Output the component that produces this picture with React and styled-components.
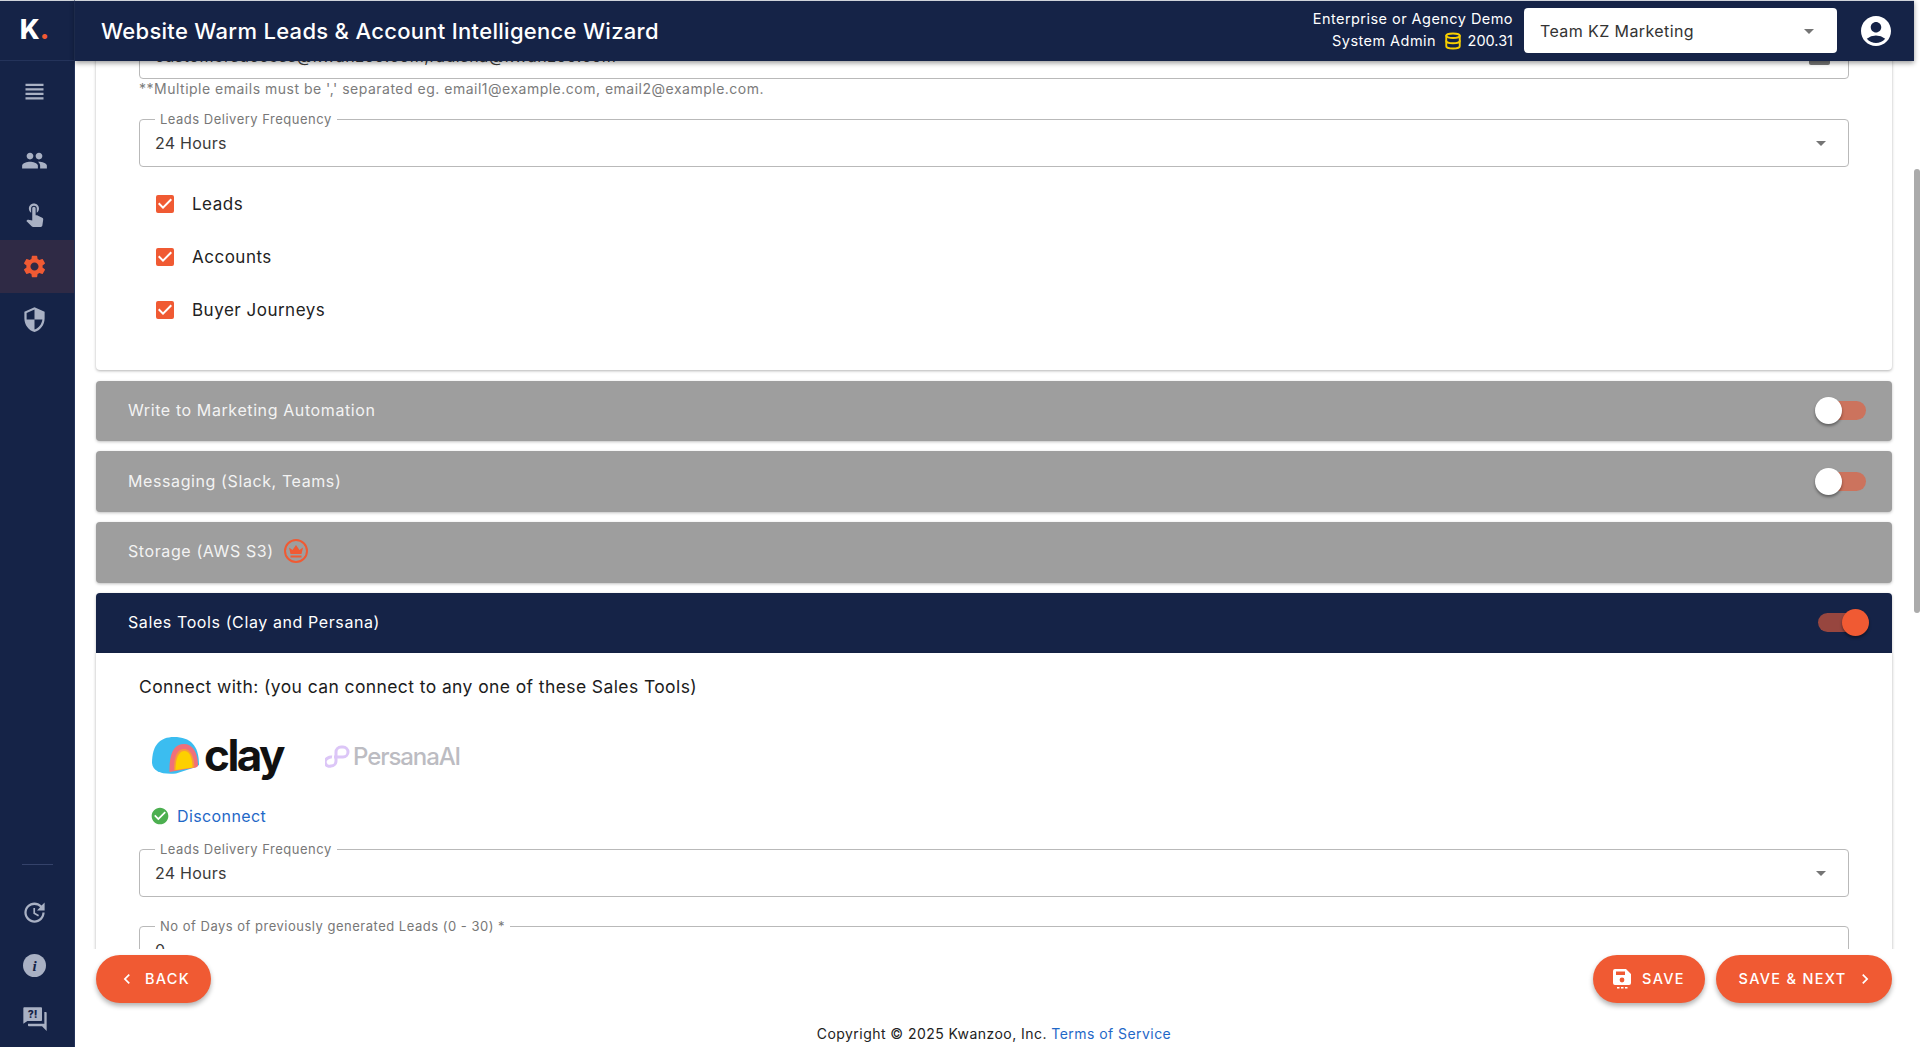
import React from "react";
import styled, { createGlobalStyle } from "styled-components";
import {
  MdViewHeadline,
  MdPeople,
  MdTouchApp,
  MdSettings,
  MdSecurity,
  MdUpdate,
  MdAccountCircle,
  MdArrowDropDown,
  MdCheckBox,
  MdCheckCircle,
  MdChevronLeft,
  MdChevronRight,
} from "react-icons/md";
import { Database } from "lucide-react";

const NAVY = "#152347";
const ORANGE = "#f05a33";

const GlobalStyle = createGlobalStyle`
  html, body { margin: 0; padding: 0; height: 100%; overflow: hidden; background: #fff; }
  body { font-family: Inter, "Open Sans", Arial, sans-serif; color: #222; }
  * { box-sizing: border-box; }
`;

const Shell = styled.div`
  display: flex;
  height: 100vh;
  overflow: hidden;
`;

const Sidebar = styled.aside`
  width: 75px;
  flex: none;
  display: flex;
  flex-direction: column;
  background: ${NAVY};
  border-top: 1px solid #cfd3da;
  border-right: 1px solid #24335a;
  padding-bottom: 2px;
`;

const Logo = styled.div`
  height: 60px;
  flex: none;
  display: flex;
  align-items: center;
  justify-content: center;
  padding: 0 5px 3px 0;
  font-size: 27px;
  font-weight: 800;
  color: #fff;
  border-bottom: 1px solid #24335a;
  span { color: ${ORANGE}; }
`;

const NavList = styled.nav`
  display: flex;
  flex-direction: column;
  margin-top: ${(p) => p.$top || 0}px;
`;

const NavItem = styled.div`
  height: 53px;
  display: flex;
  align-items: center;
  justify-content: center;
  padding-right: 5px;
  color: ${(p) => (p.$active ? ORANGE : "#a9b1c4")};
  background: ${(p) => (p.$active ? "#2f2a45" : "transparent")};
  font-size: 27px;
`;

const SideBottom = styled.div`
  margin-top: auto;
  display: flex;
  flex-direction: column;
`;

const SideRule = styled.div`
  width: 31px;
  height: 1px;
  background: #34426a;
  margin: 0 0 21px 22px;
`;

const Main = styled.div`
  flex: 1;
  min-width: 0;
  display: flex;
  flex-direction: column;
`;

const Header = styled.header`
  height: 61px;
  flex: none;
  display: flex;
  align-items: center;
  background: ${NAVY};
  border-top: 1px solid #cfd3da;
  padding: 0 20px 1px 26px;
  color: #fff;
  box-shadow: 0 2px 5px rgba(0, 0, 0, 0.4);
  position: relative;
  z-index: 2;
`;

const Title = styled.h1`
  flex: 1;
  margin: 0;
  font-size: 22px;
  font-weight: 500;
  letter-spacing: 0.3px;
`;

const UserInfo = styled.div`
  text-align: right;
  font-size: 14.5px;
  line-height: 22px;
  letter-spacing: 0.45px;
  margin: 0 11px 1px 0;
  svg { vertical-align: -4px; margin: 0 6px 0 3px; color: #f7cf00; }
`;

const Credits = styled.span`
  letter-spacing: 0;
`;

const TeamSelect = styled.div`
  width: 313px;
  height: 45px;
  display: flex;
  align-items: center;
  justify-content: space-between;
  padding: 0 16px;
  background: #fff;
  color: #333;
  border-radius: 4px;
  font-size: 16px;
  letter-spacing: 0.4px;
  margin-right: 21px;
  svg { color: #757575; }
`;

const Scroller = styled.div`
  flex: 1;
  min-height: 0;
  overflow: hidden;
  padding: 0 22px 0 21px;
  display: flex;
  flex-direction: column;
`;

const Card = styled.section`
  flex: none;
  margin-top: -30px;
  height: 339px;
  padding: 0 43px;
  background: #fff;
  border-radius: 0 0 4px 4px;
  box-shadow: 0 1px 3px rgba(0, 0, 0, 0.3);
`;

const Field = styled.div`
  position: relative;
  height: 48px;
  display: flex;
  align-items: center;
  justify-content: space-between;
  padding: 0 17px 0 15px;
  border: 1px solid #b9b9b9;
  border-radius: 4px;
  font-size: 16px;
  letter-spacing: 0.25px;
  color: #3a3a3a;
  svg { margin-right: -2px; color: #757575; }
`;

const EmailField = styled(Field)`
  padding-top: 2px;
  letter-spacing: 0.55px;
`;

const FieldLabel = styled.span`
  position: absolute;
  top: -9px;
  left: 15px;
  padding: 0 5px;
  background: #fff;
  font-size: 13px;
  line-height: 16px;
  letter-spacing: 0.5px;
  color: #777;
`;

const ListButton = styled.span`
  width: 21px;
  height: 20px;
  margin: -2px 1px 0 0;
  border-radius: 2px;
  background: #777;
`;

const Helper = styled.p`
  margin: 1px 0 21px;
  height: 18px;
  font-size: 14px;
  line-height: 18px;
  letter-spacing: 0.5px;
  color: #7b7b7b;
`;

const Checks = styled.div`
  display: flex;
  flex-direction: column;
  margin-top: 10px;
`;

const CheckRow = styled.label`
  height: 53px;
  display: flex;
  align-items: center;
  padding-left: 14px;
  font-size: 17px;
  letter-spacing: 0.5px;
  color: #222;
  svg { color: ${ORANGE}; margin-right: 15px; }
`;

const Rows = styled.div`
  display: flex;
  flex-direction: column;
  gap: 10px;
  margin-top: 10.67px;
  flex: none;
`;

const Row = styled.div`
  height: 60.67px;
  flex: none;
  display: flex;
  align-items: center;
  justify-content: space-between;
  padding: 0 26px 2px 32px;
  color: ${(p) => (p.$open ? "#fff" : "#f3f3f3")};
  background: ${(p) => (p.$open ? NAVY : "#9e9e9e")};
  border-radius: ${(p) => (p.$open ? "4px 4px 0 0" : "4px")};
  font-size: 16px;
  letter-spacing: 0.6px;
  box-shadow: 0 1px 3px rgba(0, 0, 0, 0.25);
`;

const RowTitle = styled.span`
  display: flex;
  align-items: center;
  gap: 10px;
`;

const CrownBadge = styled.span`
  width: 24px;
  height: 24px;
  display: flex;
  align-items: center;
  justify-content: center;
  border: 2px solid ${ORANGE};
  border-radius: 50%;
  color: ${ORANGE};
`;

const Track = styled.span`
  position: relative;
  width: 48px;
  height: 19px;
  margin-top: 2px;
  border-radius: 10px;
  background: ${(p) => (p.$on ? "#97463f" : "#cc735d")};
`;

const Knob = styled.span`
  position: absolute;
  top: -4px;
  left: ${(p) => (p.$on ? "24px" : "-3px")};
  width: 27px;
  height: 27px;
  border-radius: 50%;
  background: ${(p) => (p.$on ? ORANGE : "#fff")};
  box-shadow: 0 2px 3px rgba(0, 0, 0, 0.4);
`;

const Panel = styled.div`
  padding: 22px 43px 0;
  background: #fff;
  box-shadow: 0 1px 3px rgba(0, 0, 0, 0.3);
  flex: none;
`;

const Connect = styled.p`
  margin: 0;
  font-size: 17.5px;
  line-height: 24px;
  letter-spacing: 0.4px;
  color: #1c1c1c;
`;

const Logos = styled.div`
  display: flex;
  align-items: center;
  height: 44px;
  margin: 34px 0 0 13px;
`;

const ClayWord = styled.span`
  margin-left: 5px;
  font-size: 44px;
  font-weight: 700;
  letter-spacing: -2.5px;
  line-height: 44px;
  color: #111;
`;

const PersanaWord = styled.span`
  margin: 2px 0 0 3px;
  font-size: 24px;
  font-weight: 500;
  letter-spacing: -1.1px;
  color: #bcbcc2;
`;

const PersanaMark = styled.svg`
  margin: 4px 0 0 42px;
`;

const StatusRow = styled.div`
  display: flex;
  align-items: center;
  gap: 7px;
  margin: 27px 0 0 11px;
  height: 24px;
  font-size: 16px;
  letter-spacing: 0.4px;
  color: #1f68c7;
  svg { color: #4caf50; }
`;

const StackField = styled(Field)`
  margin-top: ${(p) => p.$top}px;
`;

const Footer = styled.footer`
  height: 98px;
  flex: none;
  display: flex;
  flex-direction: column;
  padding: 6px 22px 0 21px;
  background: #fff;
  position: relative;
`;

const Actions = styled.div`
  display: flex;
  justify-content: space-between;
`;

const ActionGroup = styled.div`
  display: flex;
  gap: 11px;
`;

const ActionButton = styled.button`
  height: 48px;
  width: ${(p) => p.$w}px;
  display: flex;
  align-items: center;
  justify-content: center;
  gap: ${(p) => p.$gap || 12}px;
  padding: 0 0 1px ${(p) => p.$shift || 0}px;
  border: 0;
  border-radius: 24px;
  background: ${ORANGE};
  color: #fff;
  font-family: inherit;
  font-size: 14.5px;
  font-weight: 500;
  letter-spacing: 1.3px;
  box-shadow: 0 3px 5px rgba(0, 0, 0, 0.3);
`;

const Copyright = styled.div`
  margin-top: 22px;
  text-align: center;
  font-size: 14px;
  line-height: 18px;
  letter-spacing: 0.45px;
  color: #222;
  a { color: #1f68c7; text-decoration: none; }
`;

const Rail = styled.div`
  width: 6px;
  flex: none;
  padding-top: 169px;
  background: #fff;
`;

const Thumb = styled.div`
  height: 444px;
  border-radius: 3px;
  background: #ababab;
`;

function Toggle({ on }) {
  return (
    <Track $on={on}>
      <Knob $on={on} />
    </Track>
  );
}

function ForumIcon() {
  return (
    <svg width="28" height="28" viewBox="0 0 24 24" fill="currentColor">
      <path d="M22 6h-2v10H6v1.500c0 .4.3.7.7.7H18l4 4V6.700c0-.4-.3-.7-.7-.7zM18 13V2.700c0-.4-.3-.7-.7-.7H2.700c-.4 0-.7.3-.7.7V16l3.500-2.300h11.800c.4 0 .7-.3.7-.7z" />
      <text x="10" y="11" textAnchor="middle" fontSize="9" fontWeight="800" fontFamily="Inter, sans-serif" fill={NAVY}>?!</text>
    </svg>
  );
}

function InfoIcon() {
  return (
    <svg width="23" height="23" viewBox="0 0 23 23">
      <circle cx="11.500" cy="11.500" r="11.500" fill="currentColor" />
      <text x="11.500" y="17" textAnchor="middle" fontSize="15" fontStyle="italic" fontWeight="700" fontFamily="'Liberation Serif', serif" fill={NAVY}>i</text>
    </svg>
  );
}

function CrownIcon() {
  return (
    <svg width="14" height="13" viewBox="0 0 14 13" fill={ORANGE}>
      <path d="M0 2.500l3.500 2.500L7 0l3.500 5L14 2.500 12.500 9h-11z" />
      <rect x="1.500" y="10.500" width="11" height="2" />
    </svg>
  );
}

function SaveIcon() {
  return (
    <svg width="18" height="20" viewBox="0 0 18 20" fill="#fff">
      <path d="M2 0h11l5 5v9a2 2 0 0 1-2 2H2a2 2 0 0 1-2-2V2a2 2 0 0 1 2-2zm1 2.500v3.500h9V2.500H3z" fillRule="evenodd" />
      <circle cx="9" cy="11" r="2.400" fill={ORANGE} />
      <rect x="4" y="18" width="2.500" height="1.500" />
      <rect x="8" y="18" width="2.500" height="1.500" />
      <rect x="12" y="18" width="2.500" height="1.500" />
    </svg>
  );
}

function ClayArch() {
  return (
    <svg width="47" height="37" viewBox="0 0 47 37">
      <path d="M0 26C0 8 8 0 22 0c17 0 25 9 25 28l-3 2-20 6.500C10 37.500 1 35 0 26z" fill="#3bbdf0" />
      <path d="M17.500 35C17 16 22 7 32 7c9 0 14 9 14 22l-2 1.500z" fill="#f0707a" />
      <path d="M22 33.500C22 20 25 12 32 12c7 0 10 8 10.500 18.500z" fill="#f79a3c" />
      <path d="M23.500 33C23.500 21 27 14 32.500 14c5 0 8 7 8 16.500z" fill="#fdd000" />
    </svg>
  );
}

function PersanaIcon() {
  return (
    <PersanaMark width="25" height="24" viewBox="0 0 25 24" fill="none" stroke="#dcc6f7" strokeWidth="3">
      <path d="M9 12h9a5 5 0 0 0 0-10h-2a5 5 0 0 0-5 5v9a5 5 0 0 1-5 5 4 4 0 0 1-3-8 5 5 0 0 1 4-1" />
    </PersanaMark>
  );
}

export default function App() {
  return (
    <>
      <GlobalStyle />
      <Shell>
        <Sidebar>
          <Logo>K<span>.</span></Logo>
          <NavList $top={4}>
            <NavItem><MdViewHeadline /></NavItem>
          </NavList>
          <NavList $top={16}>
            <NavItem><MdPeople /></NavItem>
            <NavItem><MdTouchApp /></NavItem>
            <NavItem $active><MdSettings /></NavItem>
            <NavItem><MdSecurity /></NavItem>
          </NavList>
          <SideBottom>
            <SideRule />
            <NavItem><MdUpdate /></NavItem>
            <NavItem><InfoIcon /></NavItem>
            <NavItem><ForumIcon /></NavItem>
          </SideBottom>
        </Sidebar>

        <Main>
          <Header>
            <Title>Website Warm Leads &amp; Account Intelligence Wizard</Title>
            <UserInfo>
              <div>Enterprise or Agency Demo</div>
              <div>System Admin <Database size={18} strokeWidth={2.5} /><Credits>200.31</Credits></div>
            </UserInfo>
            <TeamSelect>
              Team KZ Marketing
              <MdArrowDropDown size={24} />
            </TeamSelect>
            <MdAccountCircle size={36} />
          </Header>

          <Scroller>
            <Card>
              <EmailField>
                customersuccess@kwanzoo.com,radisha@kwanzoo.com
                <ListButton />
              </EmailField>
              <Helper>**Multiple emails must be ',' separated eg. email1@example.com, email2@example.com.</Helper>
              <Field>
                <FieldLabel>Leads Delivery Frequency</FieldLabel>
                24 Hours
                <MdArrowDropDown size={24} />
              </Field>
              <Checks>
                <CheckRow><MdCheckBox size={24} />Leads</CheckRow>
                <CheckRow><MdCheckBox size={24} />Accounts</CheckRow>
                <CheckRow><MdCheckBox size={24} />Buyer Journeys</CheckRow>
              </Checks>
            </Card>

            <Rows>
              <Row>
                Write to Marketing Automation
                <Toggle />
              </Row>
              <Row>
                Messaging (Slack, Teams)
                <Toggle />
              </Row>
              <Row>
                <RowTitle>
                  Storage (AWS S3)
                  <CrownBadge><CrownIcon /></CrownBadge>
                </RowTitle>
              </Row>
              <Row $open>
                Sales Tools (Clay and Persana)
                <Toggle on />
              </Row>
            </Rows>

            <Panel>
              <Connect>Connect with: (you can connect to any one of these Sales Tools)</Connect>
              <Logos>
                <ClayArch />
                <ClayWord>clay</ClayWord>
                <PersanaIcon />
                <PersanaWord>PersanaAI</PersanaWord>
              </Logos>
              <StatusRow>
                <MdCheckCircle size={20} />
                Disconnect
              </StatusRow>
              <StackField $top={21}>
                <FieldLabel>Leads Delivery Frequency</FieldLabel>
                24 Hours
                <MdArrowDropDown size={24} />
              </StackField>
              <StackField $top={29}>
                <FieldLabel>No of Days of previously generated Leads (0 - 30) *</FieldLabel>
                0
              </StackField>
            </Panel>
          </Scroller>

          <Footer>
            <Actions>
              <ActionButton $w={115} $gap={8}><MdChevronLeft size={20} />BACK</ActionButton>
              <ActionGroup>
                <ActionButton $w={112} $gap={11}><SaveIcon />SAVE</ActionButton>
                <ActionButton $w={176} $gap={9} $shift={6}>SAVE &amp; NEXT<MdChevronRight size={20} /></ActionButton>
              </ActionGroup>
            </Actions>
            <Copyright>Copyright © 2025 Kwanzoo, Inc. <a href="#terms">Terms of Service</a></Copyright>
          </Footer>
        </Main>

        <Rail><Thumb /></Rail>
      </Shell>
    </>
  );
}
